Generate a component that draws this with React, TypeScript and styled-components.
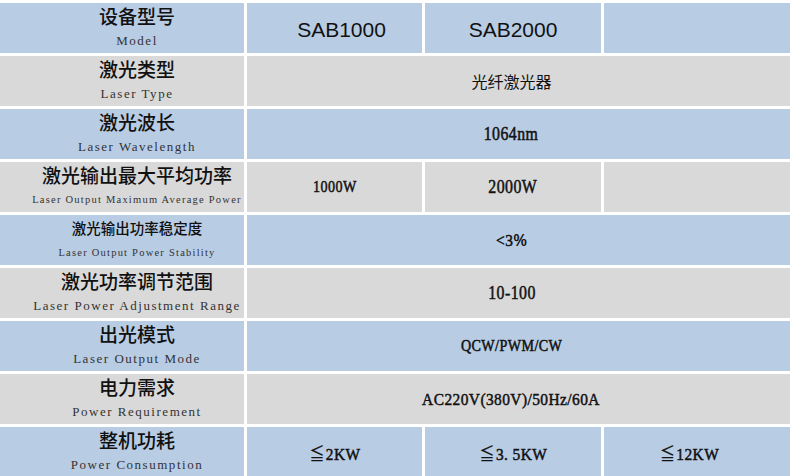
import React from 'react'
import styled, { createGlobalStyle } from 'styled-components'

const GlobalStyle = createGlobalStyle`
    html, body {
        margin: 0;
        padding: 0;
        background: #ffffff;
    }
    body {
        font-family: "Noto Sans CJK SC", "Liberation Sans", sans-serif;
        color: #111111;
    }
`

const BLUE = '#b8cce4'
const GRAY = '#d9d9d9'

type Tone = 'blue' | 'gray'
type Kind = 'sans' | 'cjk' | 'serif'

interface ValueItem {
    text: React.ReactNode
    wide?: boolean
    last?: boolean
    kind?: Kind
    size?: number
    shift?: number
}

interface SpecRow {
    zh: string
    en: string
    zhSize?: number
    enSize?: number
    values: ValueItem[]
}

const Table = styled.div`
    display: grid;
    grid-template-columns: 244px 175px 176px 1fr;
    grid-auto-rows: 50px;
    gap: 3px;
    padding-top: 3px;
    width: 790px;
    height: 476px;
    box-sizing: border-box;
    overflow: hidden;
`

const LabelCell = styled.div<{ $tone: Tone }>`
    background: ${p => (p.$tone === 'blue' ? BLUE : GRAY)};
    display: flex;
    flex-direction: column;
    align-items: center;
    justify-content: center;
    padding-left: 30px;
    white-space: nowrap;
`

const Zh = styled.div<{ $size: number }>`
    font-family: "Noto Sans CJK SC", sans-serif;
    font-weight: 500;
    font-size: ${p => p.$size}px;
    line-height: 25px;
    color: #111111;
`

const En = styled.div<{ $size: number }>`
    font-family: "Liberation Serif", "Times New Roman", serif;
    font-size: ${p => p.$size}px;
    letter-spacing: 0.117em;
    line-height: 25px;
    color: #333333;
`

const ValueCell = styled.div<{ $tone: Tone; $wide?: boolean; $last?: boolean; $shift?: number }>`
    background: ${p => (p.$tone === 'blue' ? BLUE : GRAY)};
    grid-column: ${p => (p.$wide ? '2 / -1' : 'auto')};
    display: flex;
    align-items: center;
    justify-content: center;
    padding-right: ${p => (p.$wide || p.$last ? 14 : 0)}px;
    padding-left: ${p => p.$shift ?? 0}px;
    white-space: nowrap;
`

const SansValue = styled.span<{ $size: number }>`
    font-family: "Liberation Sans", Arial, sans-serif;
    font-size: ${p => p.$size}px;
    padding-top: 3px;
    color: #111111;
`

const CjkValue = styled.span<{ $size: number }>`
    font-family: "Noto Sans CJK SC", sans-serif;
    font-size: ${p => p.$size}px;
    color: #111111;
`

const SerifValue = styled.span<{ $size: number }>`
    display: inline-block;
    font-family: "Liberation Serif", "Times New Roman", serif;
    font-size: ${p => p.$size}px;
    letter-spacing: 0.5px;
    -webkit-text-stroke: 0.5px #111111;
    transform: scaleX(0.88);
    transform-origin: center;
    color: #111111;
`

const Sign = styled.span`
    font-family: "Noto Sans CJK SC", sans-serif;
    font-size: 17px;
    -webkit-text-stroke: 0.2px #111111;
    margin-right: 1px;
`

const Percent = styled.span`
    font-family: "Liberation Sans", Arial, sans-serif;
    font-weight: 700;
    font-size: 17px;
    -webkit-text-stroke: 0;
`

const rows: SpecRow[] = [
    {
        zh: '设备型号',
        en: 'Model',
        values: [
            { text: 'SAB1000', kind: 'sans', size: 21, shift: 14 },
            { text: 'SAB2000', kind: 'sans', size: 21 },
            { text: '', last: true },
        ],
    },
    {
        zh: '激光类型',
        en: 'Laser Type',
        values: [{ text: '光纤激光器', wide: true, kind: 'cjk', size: 16 }],
    },
    {
        zh: '激光波长',
        en: 'Laser Wavelength',
        values: [{ text: '1064nm', wide: true, size: 18 }],
    },
    {
        zh: '激光输出最大平均功率',
        en: 'Laser Output Maximum Average Power',
        enSize: 10.5,
        values: [
            { text: '1000W', size: 16 },
            { text: '2000W', size: 18 },
            { text: '', last: true },
        ],
    },
    {
        zh: '激光输出功率稳定度',
        en: 'Laser Output Power Stability',
        zhSize: 14.5,
        enSize: 10.5,
        values: [
            {
                text: (
                    <>
                        {'<3'}
                        <Percent>%</Percent>
                    </>
                ),
                wide: true,
            },
        ],
    },
    {
        zh: '激光功率调节范围',
        en: 'Laser Power Adjustment Range',
        values: [{ text: '10-100', wide: true, size: 18 }],
    },
    {
        zh: '出光模式',
        en: 'Laser Output Mode',
        values: [{ text: 'QCW/PWM/CW', wide: true, size: 16 }],
    },
    {
        zh: '电力需求',
        en: 'Power Requirement',
        values: [{ text: 'AC220V(380V)/50Hz/60A', wide: true }],
    },
    {
        zh: '整机功耗',
        en: 'Power Consumption',
        values: [
            { text: <><Sign>≦</Sign>2KW</> },
            { text: <><Sign>≦</Sign>3. 5KW</> },
            { text: <><Sign>≦</Sign>12KW</>, last: true },
        ],
    },
]

const renderValue = (v: ValueItem) => {
    const size = v.size ?? 17.5
    if (v.text === '') return null
    if (v.kind === 'sans') return <SansValue $size={size}>{v.text}</SansValue>
    if (v.kind === 'cjk') return <CjkValue $size={size}>{v.text}</CjkValue>
    return <SerifValue $size={size}>{v.text}</SerifValue>
}

export default function App() {
    return (
        <>
            <GlobalStyle />
            <Table>
                {rows.map((row, i) => {
                    const tone: Tone = i % 2 === 0 ? 'blue' : 'gray'
                    return (
                        <React.Fragment key={row.zh}>
                            <LabelCell $tone={tone}>
                                <Zh $size={row.zhSize ?? 19}>{row.zh}</Zh>
                                <En $size={row.enSize ?? 13}>{row.en}</En>
                            </LabelCell>
                            {row.values.map((v, j) => (
                                <ValueCell
                                    key={j}
                                    $tone={tone}
                                    $wide={v.wide}
                                    $last={v.last}
                                    $shift={v.shift}
                                >
                                    {renderValue(v)}
                                </ValueCell>
                            ))}
                        </React.Fragment>
                    )
                })}
            </Table>
        </>
    )
}
